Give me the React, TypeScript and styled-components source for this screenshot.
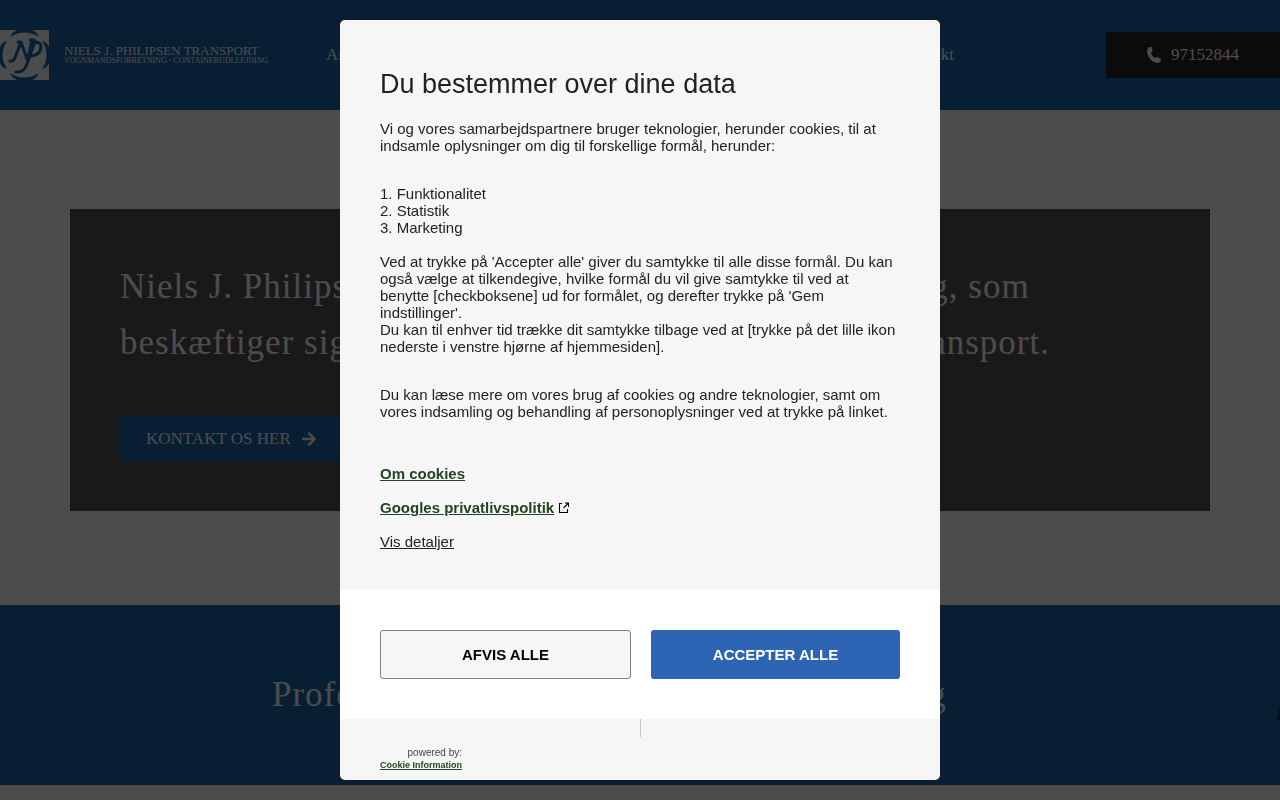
import React from 'react';
import styled, { createGlobalStyle } from 'styled-components';
import { FaArrowRight } from 'react-icons/fa';

const GlobalStyle = createGlobalStyle`
  *, *::before, *::after { box-sizing: border-box; }
  body {
    margin: 0;
    height: 100vh;
    overflow: hidden;
    background: #ffffff;
    font-family: "Liberation Sans", Arial, sans-serif;
  }
  h1, h2, p, ul, ol { margin: 0; padding: 0; font-weight: 400; }
`;

const serif = '"Liberation Serif", "Times New Roman", serif';

const Site = styled.div`
  font-family: ${serif};
  color: #ffffff;
`;

const Header = styled.header`
  display: grid;
  grid-template-columns: 326px minmax(0, 628px) 1fr;
  align-items: center;
  height: 110px;
  background: #1a67ac;
`;

const Brand = styled.a`
  display: flex;
  align-items: center;
  gap: 15px;
  color: inherit;
  text-decoration: none;
`;

const BrandText = styled.span`
  display: flex;
  flex-direction: column;
  white-space: nowrap;
`;

const BrandName = styled.span`
  font-size: 13px;
  line-height: 12px;
`;

const BrandTagline = styled.span`
  font-size: 8px;
  line-height: 8px;
`;

const Nav = styled.nav`
  display: flex;
  justify-content: space-between;
  font-size: 17px;
  line-height: 24px;
`;

const NavLink = styled.a`
  color: inherit;
  text-decoration: none;
`;

const PhoneLink = styled.a`
  display: flex;
  align-items: center;
  justify-content: center;
  justify-self: end;
  gap: 10px;
  width: 174px;
  height: 46px;
  background: #262626;
  color: inherit;
  font-size: 17px;
  text-decoration: none;
`;

const Hero = styled.section`
  padding: 99px 70px 94px;
`;

const HeroPanel = styled.div`
  max-width: 1140px;
  margin: 0 auto;
  padding: 50px;
  background: #545454;
`;

const heading = `
  font-size: 35px;
  line-height: 56px;
  letter-spacing: 1px;
  white-space: nowrap;
`;

const HeroTitle = styled.h1`
  ${heading}
`;

const HeroLink = styled.a`
  display: inline-flex;
  align-items: center;
  gap: 10px;
  height: 45px;
  margin-top: 45px;
  padding: 0 26px;
  background: #1a67ac;
  color: inherit;
  font-size: 17px;
  vertical-align: top;
  text-decoration: none;
`;

const Band = styled.section`
  display: flex;
  align-items: center;
  justify-content: space-between;
  height: 180px;
  padding-left: 272px;
  background: #1a67ac;
`;

const BandTitle = styled.h2`
  ${heading}
`;

const Overlay = styled.div`
  position: fixed;
  inset: 0;
  display: flex;
  align-items: flex-start;
  justify-content: center;
  padding: 20px;
  background: rgba(0, 0, 0, 0.7);
`;

const Dialog = styled.div`
  width: 100%;
  max-width: 600px;
  border-radius: 5px;
  overflow: hidden;
  background: #f6f6f6;
  color: #222222;
  font-size: 15px;
  line-height: 17px;
`;

const DialogBody = styled.div`
  padding: 48px 40px 40px;
`;

const DialogTitle = styled.h2`
  margin-bottom: 20px;
  font-size: 27px;
  line-height: 32px;
`;

const Paragraph = styled.p<{ $space: number }>`
  margin-bottom: ${({ $space }) => $space}px;
`;

const Purposes = styled.ol`
  margin-bottom: 17px;
  list-style-position: inside;
`;

const Links = styled.div`
  display: flex;
  flex-direction: column;
  align-items: flex-start;
  gap: 17px;
`;

const PolicyLink = styled.a`
  color: #224422;
  font-weight: 700;
`;

const PolicyRow = styled.span`
  display: flex;
  align-items: center;
  gap: 4px;
`;

const DetailsButton = styled.button`
  padding: 0;
  border: 0;
  background: none;
  color: inherit;
  font: inherit;
  text-decoration: underline;
`;

const Actions = styled.div`
  display: flex;
  gap: 20px;
  padding: 40px;
  background: #ffffff;
`;

const ActionButton = styled.button<{ $primary?: boolean }>`
  flex: 1 1 0;
  height: 49px;
  border: ${({ $primary }) => ($primary ? '0' : '1px solid #808080')};
  padding: 0;
  border-radius: 3px;
  background: ${({ $primary }) => ($primary ? '#2d64b3' : '#f6f6f6')};
  color: ${({ $primary }) => ($primary ? '#ffffff' : '#000000')};
  font: 700 15px/17px "Liberation Sans", Arial, sans-serif;
`;

const DialogFooter = styled.footer`
  display: flex;
  flex-direction: column;
  height: 61px;
  padding: 0 40px;
`;

const Divider = styled.span`
  align-self: center;
  width: 1px;
  height: 18px;
  margin-left: 1px;
  background: #c4c4c4;
`;

const Powered = styled.div`
  display: flex;
  flex-direction: column;
  align-items: flex-end;
  align-self: flex-start;
  margin-top: 10px;
  color: #444444;
  font-size: 10px;
  line-height: 12px;
`;

const PoweredLink = styled.a`
  color: #224422;
  font-size: 9px;
  font-weight: 700;
`;

const LogoMark = () => (
  <svg width="49" height="50" viewBox="0 0 49 50" aria-hidden="true">
    <rect width="49" height="50" fill="#ffffff" />
    <g fill="#1a67ac">
      <path d="M10 7Q12 2 17 0H32Q37 2 39 7Q24 -2 10 7Z" />
      <path d="M10 43Q12 48 17 50H32Q37 48 39 43Q24 52 10 43Z" />
      <path d="M7 11Q-2 25 7 39Q2 38 0 33V17Q2 12 7 11Z" />
      <path d="M42 11Q51 25 42 39Q47 38 49 33V17Q47 12 42 11Z" />
    </g>
    <g fill="none" stroke="#1a67ac" strokeLinecap="round" strokeLinejoin="round">
      <path strokeWidth="3" d="M10 31H12Q14 31 16 25L21 12M18 12H21L27 29Q29 25 32 10" />
      <path strokeWidth="3" d="M30 10H34M35 11L27 34Q24 43 16 42" />
      <path strokeWidth="3" d="M31 14Q40 10 41 16Q41 25 31 26" />
    </g>
  </svg>
);

const PhoneIcon = () => (
  <svg width="14" height="16" viewBox="0 0 14 16" fill="currentColor" aria-hidden="true">
    <path d="M1.5.6Q3.5-.3 5 .3L5.6 4.6Q5 5.6 3.8 6Q5 9.5 8.3 11.3Q9 10 10.3 10L14 12Q14 14 12.8 15.2Q10 16.6 6 14.4Q1 11 .3 6Q-.2 2 1.5.6Z" />
  </svg>
);

const ExternalIcon = () => (
  <svg width="11" height="11" viewBox="0 0 11 11" fill="none" stroke="#000000" aria-hidden="true">
    <path d="M4 1.5H1.5V10.5H9.5V7M7 1H10.5V5M10 1.5L5.5 6" strokeWidth="1.1" />
  </svg>
);

const TruckIcon = () => (
  <svg width="4" height="16" viewBox="0 0 4 16" aria-hidden="true">
    <path d="M4 1L1 14H0V15H4Z" fill="#262626" />
  </svg>
);

const BandIcon = styled.span`
  display: flex;
  padding-top: 36px;
`;

export default function App() {
  return (
    <>
      <GlobalStyle />
      <Site>
        <Header>
          <Brand href="#">
            <LogoMark />
            <BrandText>
              <BrandName>NIELS J. PHILIPSEN TRANSPORT</BrandName>
              <BrandTagline>VOGNMANDSFORRETNING - CONTAINERUDLLEJNING</BrandTagline>
            </BrandText>
          </Brand>
          <Nav>
            <NavLink href="#">Anlæg</NavLink>
            <NavLink href="#">Container</NavLink>
            <NavLink href="#">Transport</NavLink>
            <NavLink href="#">Kontakt</NavLink>
          </Nav>
          <PhoneLink href="tel:97152844">
            <PhoneIcon />
            97152844
          </PhoneLink>
        </Header>
        <Hero>
          <HeroPanel>
            <HeroTitle>
              Niels J. Philipsen Transport er en vognmandsforretning, som
              <br />
              beskæftiger sig med containerudlejning og containertransport.
            </HeroTitle>
            <HeroLink href="#">
              KONTAKT OS HER
              <FaArrowRight size={16} />
            </HeroLink>
          </HeroPanel>
        </Hero>
        <Band>
          <BandTitle>Professionel transport, og containerudlejning</BandTitle>
          <BandIcon>
            <TruckIcon />
          </BandIcon>
        </Band>
      </Site>
      <Overlay>
        <Dialog role="dialog" aria-modal="true" aria-labelledby="consent-title">
          <DialogBody>
            <DialogTitle id="consent-title">Du bestemmer over dine data</DialogTitle>
            <Paragraph $space={31}>
              Vi og vores samarbejdspartnere bruger teknologier, herunder cookies, til at indsamle
              oplysninger om dig til forskellige formål, herunder:
            </Paragraph>
            <Purposes>
              <li>Funktionalitet</li>
              <li>Statistik</li>
              <li>Marketing</li>
            </Purposes>
            <Paragraph $space={31}>
              Ved at trykke på 'Accepter alle' giver du samtykke til alle disse formål. Du kan også
              vælge at tilkendegive, hvilke formål du vil give samtykke til ved at benytte
              [checkboksene] ud for formålet, og derefter trykke på 'Gem indstillinger'.
              <br />
              Du kan til enhver tid trække dit samtykke tilbage ved at [trykke på det lille ikon
              nederste i venstre hjørne af hjemmesiden].
            </Paragraph>
            <Paragraph $space={45}>
              Du kan læse mere om vores brug af cookies og andre teknologier, samt om vores
              indsamling og behandling af personoplysninger ved at trykke på linket.
            </Paragraph>
            <Links>
              <PolicyLink href="#">Om cookies</PolicyLink>
              <PolicyRow>
                <PolicyLink href="#">Googles privatlivspolitik</PolicyLink>
                <ExternalIcon />
              </PolicyRow>
              <DetailsButton type="button">Vis detaljer</DetailsButton>
            </Links>
          </DialogBody>
          <Actions>
            <ActionButton type="button">AFVIS ALLE</ActionButton>
            <ActionButton type="button" $primary>
              ACCEPTER ALLE
            </ActionButton>
          </Actions>
          <DialogFooter>
            <Divider />
            <Powered>
              powered by:
              <PoweredLink href="#">Cookie Information</PoweredLink>
            </Powered>
          </DialogFooter>
        </Dialog>
      </Overlay>
    </>
  );
}
